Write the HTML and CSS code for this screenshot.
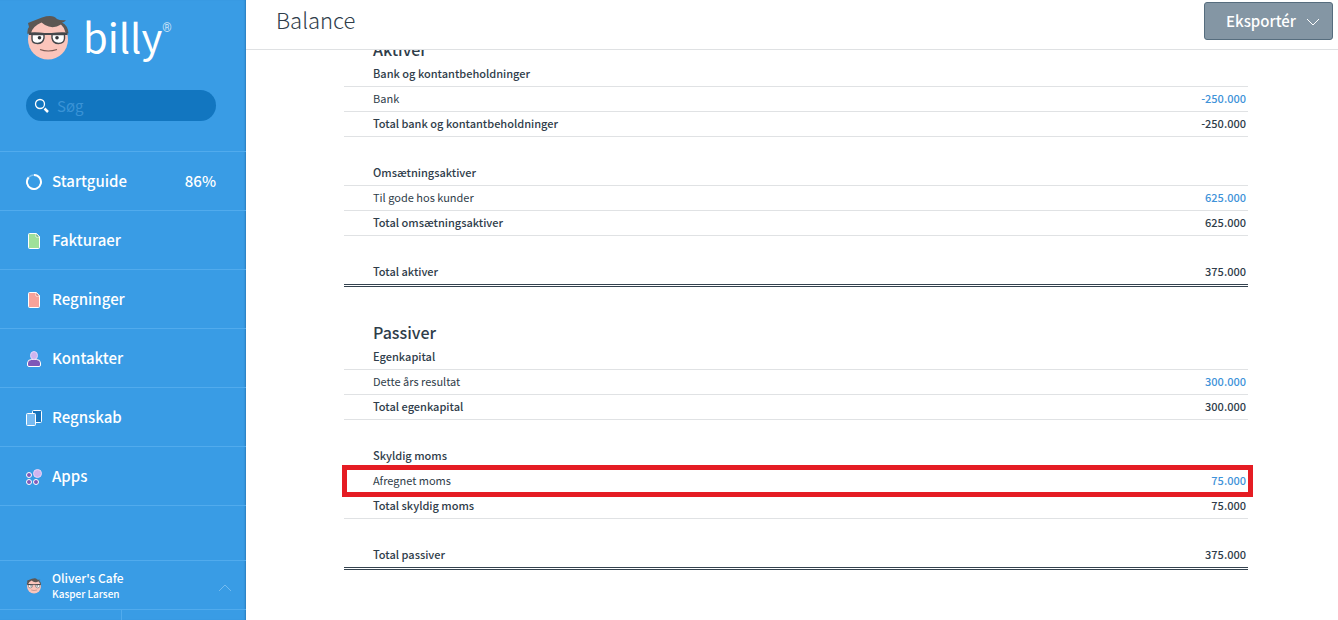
FILE: index.html
```html
<!DOCTYPE html>
<html lang="da">
  <head>
    <meta charset="UTF-8" />
    <meta name="viewport" content="width=device-width, initial-scale=1.0" />
    <title>Billy - Balance</title>
    <link rel="stylesheet" href="styles.css">
  </head>
  <body>
    <!-- Face shared by the logo and the user menu -->
    <svg class="sprite" aria-hidden="true">
      <symbol id="face" viewBox="0 0 44 46">
        <circle cx="22" cy="24.500" r="20" fill="#fbc5bb" />
        <path d="M1.500 19Q1 14 3 12L2 8l5-2 9-3.500Q27-1 31 4q4 2 9 1-2 2.500-4 2.500 6 3 6.500 11l-3-1q-1-5-4.500-8-8 5-16 .5l-3.500-2.500Q7 11 5 18z" fill="#5d5753" />
        <path d="M6 19.500h12v3.500q-1 5.500-6.500 5.500T6 24zM26 19.500h12.500v4q-.5 5-6 5T26 23z" fill="#fff" stroke="#45474b" stroke-width="1.400" />
        <path d="M3 17.500q9-.5 15.500.5h7q8-1 16-.5v2.500H3z" fill="#45474b" />
        <circle cx="13.500" cy="22.800" r="1.800" fill="#34363a" />
        <circle cx="31" cy="22.800" r="1.800" fill="#34363a" />
        <path d="M14 34.500q8 3 17 0" fill="none" stroke="#7a5a52" stroke-width="1.100" />
      </symbol>
    </svg>

    <aside class="sidebar">
      <a class="logo" href="#">
        <svg class="logo-face" width="44" height="46"><use href="#face" /></svg>
        <span class="logo-name">billy</span>
        <span class="logo-mark">®</span>
      </a>

      <form class="search">
        <svg width="16" height="16" viewBox="0 0 16 16">
          <circle cx="6" cy="6" r="4.500" fill="none" stroke="#fff" stroke-width="1.300" />
          <path d="M10.500 10.500l3.500 3.500" stroke="#fff" stroke-width="2.500" />
        </svg>
        <input type="search" placeholder="Søg" aria-label="Søg" />
      </form>

      <nav class="menu">
        <a href="#">
          <svg width="16" height="16" viewBox="0 0 16 16">
            <circle cx="8" cy="8" r="7" fill="none" stroke="#7fc0f0" stroke-width="1.500" />
            <path d="M8 1A7 7 0 1 1 2.600 3.500" fill="none" stroke="#fff" stroke-width="2" />
          </svg>
          Startguide
          <span class="menu-value">86%</span>
        </a>
        <a href="#">
          <svg width="16" height="16" viewBox="0 0 16 16">
            <path d="M3.500.5h7l3 3v11q0 1-1 1h-9q-1 0-1-1v-13q0-1 1-1z" fill="#9fe09a" stroke="#fff" />
            <path d="M10 .5l3.500 3.500H10z" fill="#3f9150" stroke="#fff" stroke-width=".8" />
          </svg>
          Fakturaer
        </a>
        <a href="#">
          <svg width="16" height="16" viewBox="0 0 16 16">
            <path d="M3.500.5h7l3 3v11q0 1-1 1h-9q-1 0-1-1v-13q0-1 1-1z" fill="#f8a39b" stroke="#fff" />
            <path d="M10 .5l3.500 3.500H10z" fill="#b5433c" stroke="#fff" stroke-width=".8" />
          </svg>
          Regninger
        </a>
        <a href="#">
          <svg width="16" height="16" viewBox="0 0 16 16">
            <path d="M3 15.500q-1.500 0-1.500-1.500v-2q0-3.500 4-3.500h5q4 0 4 3.500v2q0 1.500-1.500 1.500z" fill="#8058b8" stroke="#fff" />
            <ellipse cx="8" cy="4.500" rx="3.500" ry="4" fill="#cfb4ee" stroke="#e6d6f8" />
          </svg>
          Kontakter
        </a>
        <a href="#">
          <svg width="16" height="16" viewBox="0 0 16 16">
            <rect x="6.500" y=".5" width="9" height="12" rx="1" fill="#1873bb" stroke="#fff" />
            <rect x=".5" y="3.500" width="9" height="12" rx="1" fill="#78bbf2" stroke="#fff" />
          </svg>
          Regnskab
        </a>
        <a href="#">
          <svg width="16" height="16" viewBox="0 0 16 16">
            <g fill="#8058b8" stroke="#fff">
              <circle cx="3" cy="6" r="2.500" />
              <circle cx="3" cy="13" r="2.500" />
              <circle cx="10" cy="13" r="2.500" />
            </g>
            <circle cx="11.500" cy="4.500" r="4" fill="#cfb4ee" stroke="#e6d6f8" />
          </svg>
          Apps
        </a>
      </nav>

      <button class="user" type="button">
        <svg width="16" height="16"><use href="#face" /></svg>
        <span class="user-names">
          <span class="user-company">Oliver's Cafe</span>
          <span class="user-person">Kasper Larsen</span>
        </span>
        <svg class="user-arrow" width="14" height="8" viewBox="0 0 14 8">
          <path d="M1 7l6-6 6 6" fill="none" stroke="#73bbf0" />
        </svg>
      </button>
      <div class="sidebar-foot"></div>
    </aside>

    <main>
      <header class="topbar">
        <h1>Balance</h1>
        <button class="export" type="button">
          Eksportér
          <svg width="14" height="8" viewBox="0 0 14 8">
            <path d="M1 1l6 6 6-6" fill="none" stroke="#fff" />
          </svg>
        </button>
      </header>

      <table class="report">
        <tbody>
          <tr class="title"><th colspan="2">Aktiver</th></tr>
          <tr class="total"><th colspan="2">Bank og kontantbeholdninger</th></tr>
          <tr><td>Bank</td><td><a href="#">-250.000</a></td></tr>
          <tr class="total"><th>Total bank og kontantbeholdninger</th><td>-250.000</td></tr>
          <tr class="spacer"><td colspan="2"></td></tr>
          <tr class="total"><th colspan="2">Omsætningsaktiver</th></tr>
          <tr><td>Til gode hos kunder</td><td><a href="#">625.000</a></td></tr>
          <tr class="total"><th>Total omsætningsaktiver</th><td>625.000</td></tr>
          <tr class="spacer"><td colspan="2"></td></tr>
          <tr class="total sum"><th>Total aktiver</th><td>375.000</td></tr>
        </tbody>
        <tbody>
          <tr class="title"><th colspan="2">Passiver</th></tr>
          <tr class="total"><th colspan="2">Egenkapital</th></tr>
          <tr><td>Dette års resultat</td><td><a href="#">300.000</a></td></tr>
          <tr class="total"><th>Total egenkapital</th><td>300.000</td></tr>
          <tr class="spacer"><td colspan="2"></td></tr>
          <tr class="total"><th colspan="2">Skyldig moms</th></tr>
          <tr class="marked"><td>Afregnet moms</td><td><a href="#">75.000</a></td></tr>
          <tr class="total"><th>Total skyldig moms</th><td>75.000</td></tr>
          <tr class="spacer"><td colspan="2"></td></tr>
          <tr class="total sum"><th>Total passiver</th><td>375.000</td></tr>
        </tbody>
      </table>
    </main>
  </body>
</html>
```
FILE: styles.css
```css
* {
  box-sizing: border-box;
}
body {
  margin: 0;
  display: flex;
  height: 100vh;
  overflow: hidden;
  font-family: "Noto Sans CJK SC", "Open Sans", sans-serif;
  font-size: 11px;
  line-height: 16px;
  color: #2f3d4a;
  background-color: #fff;
}
a {
  color: #3f93d9;
  text-decoration: none;
}
button,
input {
  font-family: inherit;
}
.sprite {
  position: absolute;
  width: 0;
  height: 0;
}

/* Sidebar */
.sidebar {
  flex: none;
  display: flex;
  flex-direction: column;
  width: 246px;
  color: #fff;
  background-color: #399ce5;
  box-shadow: inset -2px 0 2px -1px #2a7dbd;
}
.logo {
  display: flex;
  align-items: flex-start;
  height: 90px;
  padding: 15px 26px 0;
  color: #fff;
}
.logo-name {
  margin-left: 13px;
  font-size: 40px;
  line-height: 42px;
}
.logo-mark {
  font-family: Roboto, sans-serif;
  font-size: 12px;
  line-height: 26px;
  opacity: 0.7;
}
.search {
  display: flex;
  align-items: center;
  height: 31px;
  margin: 0 30px 30px 26px;
  padding: 0 8px;
  border-radius: 16px;
  background-color: #1276c0;
}
.search input {
  flex: 1;
  min-width: 0;
  margin-left: 7px;
  padding: 0;
  border: none;
  outline: none;
  background: none;
  color: #fff;
  font-size: 15px;
}
.search input::placeholder {
  color: #3a93d6;
}
.menu a {
  display: flex;
  align-items: center;
  gap: 10px;
  height: 59px;
  padding: 0 30px 0 26px;
  border-top: 1px solid #51abed;
  color: #fff;
  font-size: 15px;
  font-weight: 500;
}
.menu a svg {
  margin-top: 2px;
}
.menu a:last-child {
  height: 60px;
  border-bottom: 1px solid #51abed;
}
.menu-value {
  margin-left: auto;
}
.user {
  display: flex;
  align-items: center;
  gap: 10px;
  height: 49px;
  margin-top: auto;
  padding: 2px 14px 0 26px;
  border: none;
  border-top: 1px solid #51abed;
  background: none;
  color: #fff;
  text-align: left;
  cursor: pointer;
}
.user-names {
  flex: 1;
}
.user-names span {
  display: block;
  font-weight: 500;
  line-height: 16px;
}
.user-company {
  font-size: 12px;
}
.user-person {
  font-size: 10px;
}
.user-arrow {
  margin-top: 4px;
}
.sidebar-foot {
  height: 11px;
  border-top: 1px solid #51abed;
}
.sidebar-foot::before {
  content: "";
  display: block;
  width: 121px;
  height: 10px;
  border-right: 1px solid #51abed;
}

/* Content */
main {
  position: relative;
  flex: 1;
  padding: 4px 90px 50px 98px;
}
.topbar {
  position: absolute;
  z-index: 1;
  top: 0;
  left: 0;
  right: 0;
  display: flex;
  justify-content: space-between;
  height: 50px;
  padding: 2px 5px 0 30px;
  border-bottom: 1px solid #dfe1e3;
  background-color: #fff;
}
h1 {
  margin: 0;
  font-size: 22px;
  font-weight: 300;
  line-height: 34px;
}
.export {
  display: flex;
  align-items: center;
  gap: 10px;
  height: 38px;
  padding: 0 12px 2px 21px;
  border: 1px solid #566d7e;
  border-radius: 3px;
  background-color: #8496a4;
  color: #fff;
  font-size: 15px;
  font-weight: 500;
  cursor: pointer;
}
.export svg {
  margin-top: 4px;
}
.report {
  width: 100%;
  border-spacing: 0;
}
.report th,
.report td {
  height: 25px;
  padding: 0 2px 2px 29px;
  border-bottom: 1px solid #e0e2e4;
  text-align: left;
}
.report td:nth-child(2) {
  text-align: right;
  font-weight: 500;
}
.report .total th,
.report .total td {
  font-weight: 500;
}
.report .title th {
  height: 58px;
  border: none;
  font-size: 16px;
  font-weight: 500;
  line-height: 22px;
  vertical-align: bottom;
}
.report .spacer td {
  height: 24px;
  border: none;
}
.report .sum th,
.report .sum td {
  height: 27px;
  border-bottom: 3px double #34424f;
}
.marked {
  position: relative;
}
.marked::after {
  content: "";
  position: absolute;
  inset: -4px -5px -3px -2px;
  border: 5px solid #e51c23;
}
```
